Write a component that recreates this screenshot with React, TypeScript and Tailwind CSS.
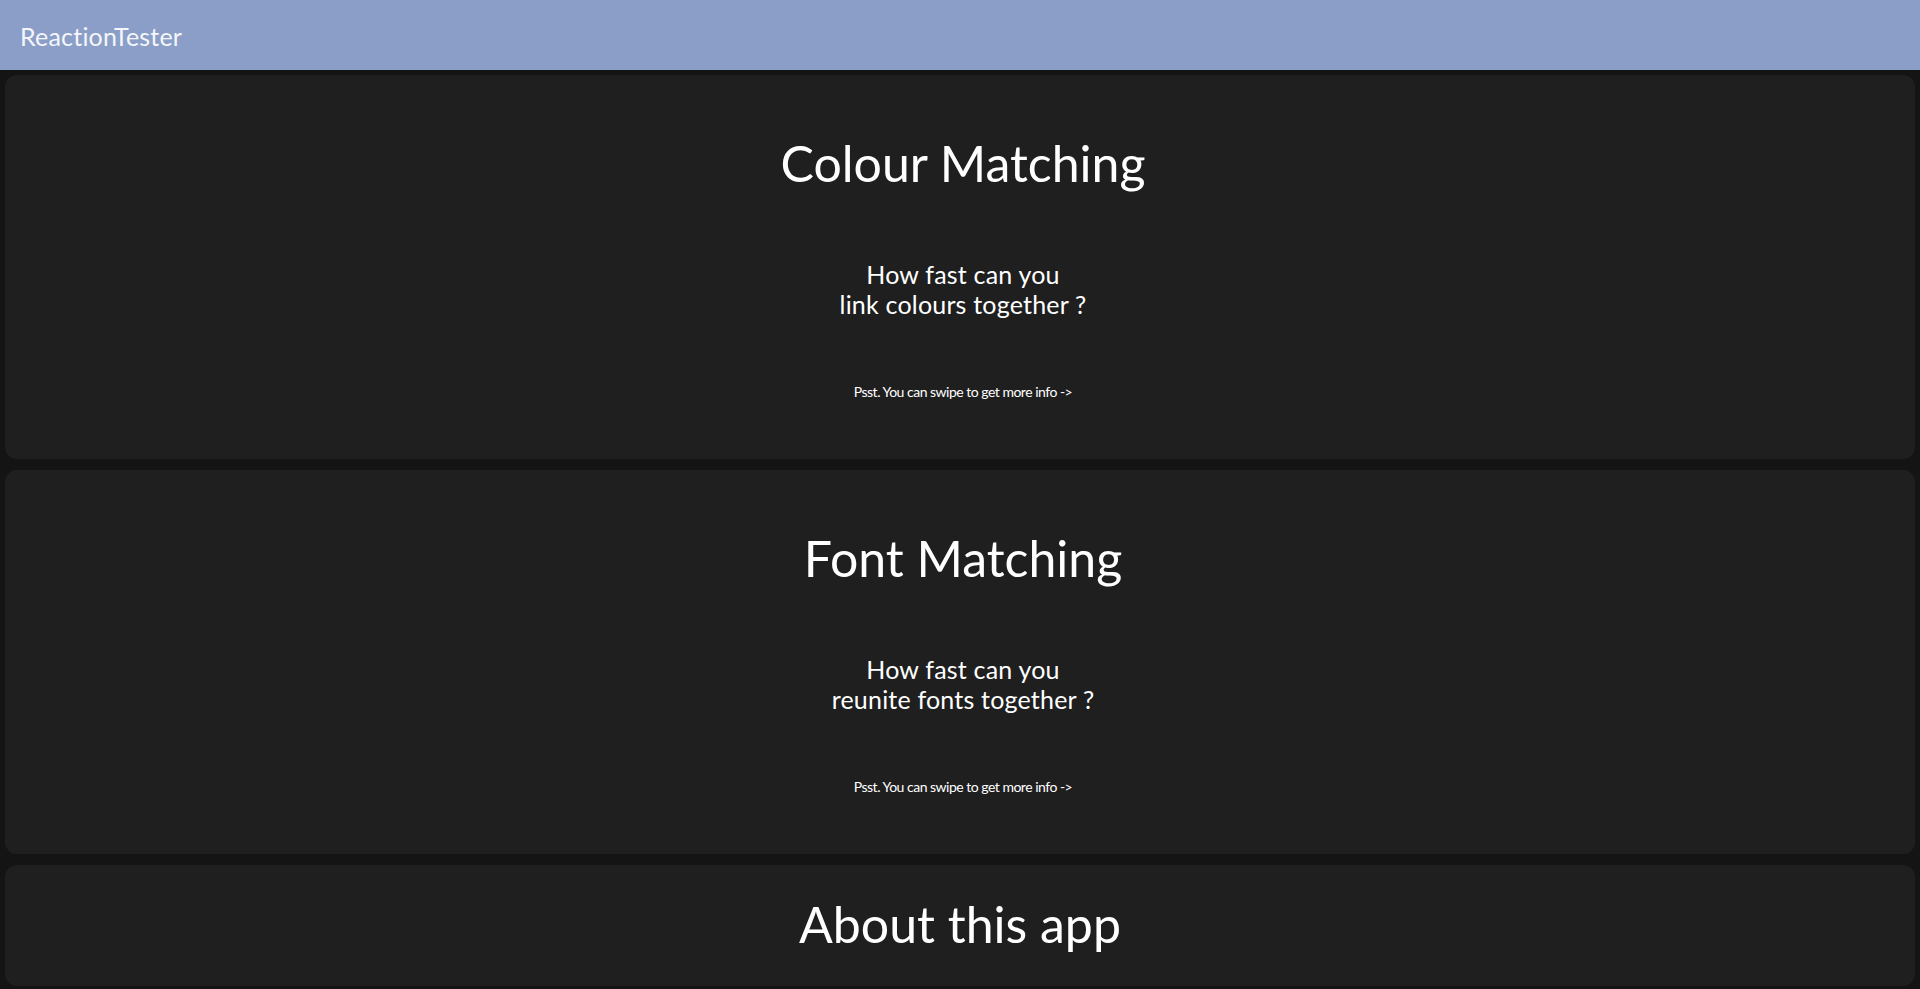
const games = [
  { title: 'Colour Matching', line1: 'How fast can you', line2: 'link colours together ?' },
  { title: 'Font Matching', line1: 'How fast can you', line2: 'reunite fonts together ?' },
];

const GameCard = ({ title, line1, line2 }: { title: string; line1: string; line2: string }) => (
  <section className="flex h-[384px] flex-col items-center rounded-xl bg-[#1f1f1f] pt-[58px] pl-[6px] text-center">
    <h2 className="text-[50px] leading-[60px]">{title}</h2>
    <p className="mt-[66px] text-[25px] leading-[30px] tracking-[0.2px]">
      {line1}
      <br />
      {line2}
    </p>
    <p className="mt-[64px] text-[14px] leading-[17px] tracking-[-0.5px]">Psst. You can swipe to get more info -&gt;</p>
  </section>
);

export default function App() {
  return (
    <div
      className="min-h-screen bg-[#141414] text-white [font-variant-ligatures:none]"
      style={{ fontFamily: 'Lato, "Noto Sans", sans-serif' }}
    >
      <header className="flex h-[70px] items-center bg-[#8a9ec7] px-5">
        <h1 className="mt-[3px] text-[25px] tracking-[0.2px] text-[#f4f6fa]">ReactionTester</h1>
      </header>
      <main className="flex flex-col gap-[11px] p-[5px]">
        {games.map((g) => (
          <GameCard key={g.title} {...g} />
        ))}
        <section className="flex flex-col items-center rounded-xl bg-[#1f1f1f] pt-[29px] pb-[32px]">
          <h2 className="text-[50px] leading-[60px]">About this app</h2>
        </section>
      </main>
    </div>
  );
}
